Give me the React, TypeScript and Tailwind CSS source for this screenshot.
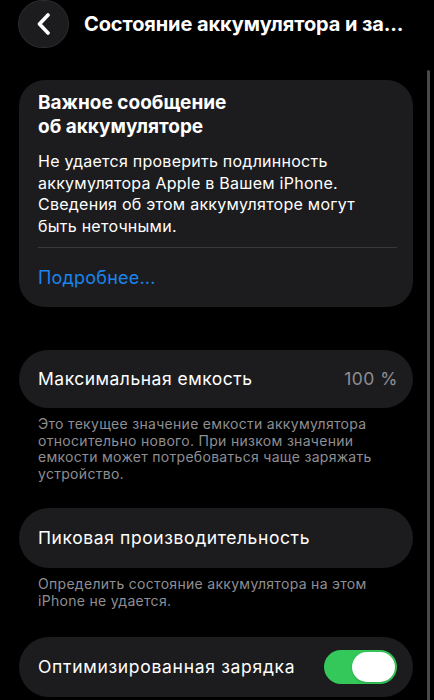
import React from "react";

export default function App() {
  return (
    <div
      className="relative w-[434px] h-[700px] overflow-hidden bg-black text-white"
      style={{ fontFamily: "Inter, 'Noto Sans', sans-serif" }}
    >
      {/* scroll indicator */}
      <div className="absolute left-[427px] top-[70px] w-[3px] h-[640px] rounded-full bg-[#4a4a4c]" />

      {/* header */}
      <div className="flex items-center h-[48px] pl-[18px]">
        <div className="w-[51px] h-[48px] rounded-full bg-[#1c1c1e] border border-[#2c2c2e] flex items-center justify-center">
          <svg width="16" height="22" viewBox="0 0 16 22" fill="none">
            <path d="M12 2 L3.5 11 L12 20" stroke="white" strokeWidth="3.6" strokeLinecap="round" strokeLinejoin="round" />
          </svg>
        </div>
        <div className="ml-[15px] text-[20px] font-bold tracking-[-0.1px] whitespace-nowrap">
          Состояние аккумулятора и за...
        </div>
      </div>

      <div className="pl-[19px] pr-[21px]">
        {/* card 1 */}
        <div className="mt-[32px] rounded-[26px] bg-[#1c1c1e] pl-[19px] pr-[16px] pt-[11px] pb-[17px]">
          <div className="text-[19px] font-bold leading-[24px]">
            Важное сообщение
            <br />
            об аккумуляторе
          </div>
          <div className="mt-[12px] pr-[22px] text-[16px] leading-[21.5px] tracking-[0.25px] text-white">
            Не удается проверить подлинность аккумулятора Apple в Вашем iPhone. Сведения об этом аккумуляторе могут быть неточными.
          </div>
          <div className="mt-[10px] h-px bg-[#38383a]" />
          <div className="mt-[18px] text-[18px] leading-[24px] tracking-[0.2px] text-[#1a84ec]">Подробнее...</div>
        </div>

        {/* card 2 */}
        <div className="mt-[43px] h-[58px] rounded-[29px] bg-[#1c1c1e] flex items-center justify-between pl-[19px] pr-[15px]">
          <span className="text-[17.5px] tracking-[0.5px]">Максимальная емкость</span>
          <span className="text-[17.5px] tracking-[0.5px] text-[#8e8e93]">100 %</span>
        </div>
        <div className="mt-[8px] pl-[19px] pr-[33px] text-[14px] leading-[16.5px] tracking-[0.3px] text-[#8e8e93]">
          Это текущее значение емкости аккумулятора относительно нового. При низком значении емкости может потребоваться чаще заряжать устройство.
        </div>

        {/* card 3 */}
        <div className="mt-[26px] h-[60px] rounded-[30px] bg-[#1c1c1e] flex items-center pl-[19px]">
          <span className="text-[17.5px] tracking-[0.6px]">Пиковая производительность</span>
        </div>
        <div className="mt-[8px] pl-[19px] pr-[33px] text-[14px] leading-[16.5px] tracking-[0.3px] text-[#8e8e93]">
          Определить состояние аккумулятора на этом iPhone не удается.
        </div>

        {/* card 4 */}
        <div className="mt-[28px] h-[60px] rounded-[30px] bg-[#1c1c1e] flex items-center justify-between pl-[19px] pr-[16px]">
          <span className="text-[17.5px] tracking-[0.7px]">Оптимизированная зарядка</span>
          <div className="w-[73px] h-[34px] rounded-full bg-[#34c759] flex items-center justify-end pr-[2px]">
            <div className="w-[43px] h-[30px] rounded-full bg-white shadow" />
          </div>
        </div>
      </div>
    </div>
  );
}
